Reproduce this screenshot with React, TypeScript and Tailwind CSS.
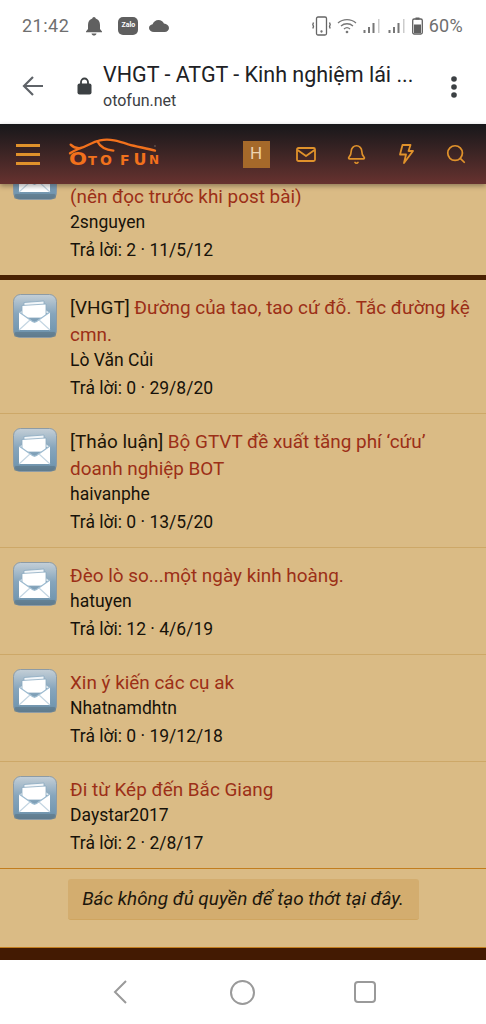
import { Bell, Search } from "lucide-react";

const threads = [
  { prefix: "[VHGT] ", title: "Đường của tao, tao cứ đỗ. Tắc đường kệ cmn.", author: "Lò Văn Củi", meta: "Trả lời: 0 · 29/8/20" },
  { prefix: "[Thảo luận] ", title: "Bộ GTVT đề xuất tăng phí ‘cứu’ doanh nghiệp BOT", author: "haivanphe", meta: "Trả lời: 0 · 13/5/20" },
  { prefix: "", title: "Đèo lò so...một ngày kinh hoàng.", author: "hatuyen", meta: "Trả lời: 12 · 4/6/19" },
  { prefix: "", title: "Xin ý kiến các cụ ak", author: "Nhatnamdhtn", meta: "Trả lời: 0 · 19/12/18" },
  { prefix: "", title: "Đi từ Kép đến Bắc Giang", author: "Daystar2017", meta: "Trả lời: 2 · 2/8/17" },
];

function EnvelopeIcon() {
  return (
    <svg width="44" height="44" viewBox="0 0 44 44" className="shrink-0">
      <defs>
        <linearGradient id="tile" x1="0" y1="0" x2="0" y2="1">
          <stop offset="0" stopColor="#c4cfd7" />
          <stop offset="0.45" stopColor="#86a5bc" />
          <stop offset="0.85" stopColor="#7397b0" />
          <stop offset="1" stopColor="#5d7a8e" />
        </linearGradient>
      </defs>
      <rect x="0.500" y="0.500" width="43" height="43" rx="7" fill="url(#tile)" stroke="#8d9ba5" />
      <rect x="1" y="38" width="42" height="5" rx="2.500" fill="#5f7a8c" opacity="0.700" />
      <path d="M6 19 21 8l16 11z" fill="#e6eef3" />
      <path d="M11 22V8.500L31 7v15z" fill="#f2f6f9" stroke="#8aa9c0" strokeWidth="0.800" />
      <path d="M9 24V11.500l24-1.500v14z" fill="#fff" stroke="#8aa9c0" strokeWidth="0.800" />
      <path d="M6 18 21.500 28.500 37 18v18H6z" fill="#fff" />
      <path d="M6 18 19.500 27.500c1.300.9 2.700.9 4 0L37 18" fill="none" stroke="#9dbbd0" strokeWidth="1.200" />
      <path d="M6 36 17 26M37 36 26 26" fill="none" stroke="#c3d5e2" strokeWidth="1.100" />
    </svg>
  );
}

function Signal() {
  return (
    <svg width="17" height="16" viewBox="0 0 17 16">
      <rect x="0.500" y="12" width="2" height="3" fill="#777" />
      <rect x="5" y="9" width="2" height="6" fill="#777" />
      <rect x="9.500" y="5" width="2" height="10" fill="#777" />
      <rect x="15" y="1" width="1.500" height="14" fill="#ccc" />
    </svg>
  );
}

function StatusBar() {
  return (
    <div className="flex h-[46px] items-center bg-white pl-[22px] pr-[23px] pt-[5px] text-[#6f6f6f]">
      <span className="text-[18px] tracking-[0.5px]">21:42</span>
      <svg width="18" height="20" viewBox="0 0 18 20" className="ml-[16px]" fill="#606060">
        <path d="M9 1c1 0 1.600.8 1.700 1.600C13.500 3.400 15 5.800 15 9v4l2 2.500v.8H1v-.8L3 13V9c0-3.200 1.500-5.600 4.300-6.400C7.400 1.800 8 1 9 1z" />
        <path d="M6.500 17.500h5C11.200 18.900 10.200 19.500 9 19.500s-2.200-.6-2.500-2z" />
      </svg>
      <div className="ml-[15px] flex h-[18px] w-[20px] items-center justify-center rounded-[5px] bg-[#5f5f5f] text-[7px] font-bold leading-none text-white">
        Zalo
      </div>
      <svg width="20" height="12" viewBox="0 0 20 12" className="ml-[11px]" fill="#606060">
        <path d="M5 12C2 12 0 10.300 0 8c0-2.100 1.600-3.600 3.600-3.800C4.500 1.800 6.700 0 9.500 0c2.500 0 4.500 1.300 5.400 3.500C17.700 3.800 20 5.500 20 8c0 2.300-1.800 4-4.300 4z" />
      </svg>
      <div className="ml-auto flex items-center">
        <svg width="19" height="20" viewBox="0 0 19 20" fill="none" stroke="#666" strokeWidth="1.300">
          <rect x="4.500" y="1" width="10" height="18" rx="1.500" />
          <path d="M1.500 6.500.8 8.500l.7 2-.7 2M17.500 6.500l.7 2-.7 2 .7 2" />
          <circle cx="9.500" cy="15.500" r="0.500" />
        </svg>
        <svg width="20" height="16" viewBox="0 0 20 16" fill="none" stroke="#777" strokeWidth="1.300" className="ml-[6px]">
          <path d="M1 5c5-4.500 13-4.500 18 0M4 8c3.300-3 8.700-3 12 0M7 11c1.700-1.500 4.300-1.500 6 0" />
          <circle cx="10" cy="14" r="0.700" fill="#777" />
        </svg>
        <div className="ml-[6px]">
          <Signal />
        </div>
        <div className="ml-[8px]">
          <Signal />
        </div>
        <svg width="11" height="18" viewBox="0 0 11 18" className="ml-[7px]">
          <rect x="0.700" y="2" width="9.600" height="15" rx="1.500" fill="none" stroke="#606060" strokeWidth="1.300" />
          <rect x="3.500" y="0.500" width="4" height="2" fill="#606060" />
          <rect x="2" y="7.500" width="7" height="8.500" fill="#606060" />
        </svg>
        <span className="ml-[6px] text-[18px] tracking-[0.3px]">60%</span>
      </div>
    </div>
  );
}

function BrowserBar() {
  return (
    <div className="flex h-[78px] items-center bg-white">
      <svg width="22" height="22" viewBox="0 0 22 22" fill="none" stroke="#5f6368" strokeWidth="2.200" className="ml-[22px] mt-[2px]">
        <path d="M21 11H2M11 2l-9 9 9 9" />
      </svg>
      <svg width="15" height="18" viewBox="0 0 15 18" className="ml-[33px] mt-[2px] shrink-0">
        <path d="M4 8V5a3.500 3.500 0 0 1 7 0v3" fill="none" stroke="#3c4043" strokeWidth="1.800" />
        <rect x="0.500" y="6.500" width="14" height="11" rx="2" fill="#3c4043" />
      </svg>
      <div className="ml-[11px] min-w-0 flex-1 pt-[4px]">
        <div className="whitespace-nowrap text-[21.500px] leading-[28px] text-[#202124]">VHGT - ATGT - Kinh nghiệm lái ...</div>
        <div className="text-[16px] leading-[24px] text-[#3c4043]">otofun.net</div>
      </div>
      <svg width="8" height="24" viewBox="0 0 8 24" fill="#3c4043" className="mr-[28px] mt-[3px]">
        <circle cx="4" cy="4" r="2.800" />
        <circle cx="4" cy="12" r="2.800" />
        <circle cx="4" cy="20" r="2.800" />
      </svg>
    </div>
  );
}

function Logo() {
  return (
    <div className="relative mb-[3px] ml-[20px] h-[45px] w-[110px] font-['DejaVu_Sans',sans-serif] font-bold leading-none text-[#f2711c]">
      <svg width="110" height="45" viewBox="0 0 330 135" className="absolute left-0 top-0" fill="none" stroke="#f2711c" strokeWidth="7" strokeLinecap="round">
        <path d="M32 44C40 52 50 56 62 54 80 50 95 36 120 31 150 25 175 33 205 43 230 50 260 55 285 62" />
        <path d="M30 70C42 62 52 58 62 54" />
        <path d="M112 34C120 50 135 60 160 62" />
        <circle cx="285" cy="48" r="2" fill="#8a7a70" stroke="none" />
      </svg>
      <span className="absolute left-[10px] top-[21px] w-[16px] scale-x-125 text-center text-[17px]">O</span>
      <span className="absolute left-[28px] top-[24px] w-[9px] text-center text-[13px]">T</span>
      <span className="absolute left-[40px] top-[23px] w-[12px] text-center text-[14px]">O</span>
      <span className="absolute left-[60px] top-[23px] w-[8px] text-center text-[14px]">F</span>
      <span className="absolute left-[73px] top-[22px] w-[14px] text-center text-[16px]">U</span>
      <span className="absolute left-[89px] top-[24px] w-[10px] text-center text-[12px]">N</span>
    </div>
  );
}

function Header() {
  return (
    <header className="relative z-10 flex h-[60px] shrink-0 items-center bg-gradient-to-b from-[#17171a] to-[#67322f] shadow-[0_2px_5px_rgba(0,0,0,0.35)]">
      <div className="ml-[16px] flex w-[24px] flex-col gap-[6px]">
        <span className="h-[3px] bg-[#e0922b]" />
        <span className="h-[3px] bg-[#e0922b]" />
        <span className="h-[3px] bg-[#e0922b]" />
      </div>
      <Logo />
      <div className="ml-auto mr-[5px] flex items-center text-[#e0922b]">
        <div className="flex w-[50px] justify-center">
          <div className="flex h-[27px] w-[27px] items-center justify-center bg-[#a5692a] text-[17px] text-[#eed5b0]">H</div>
        </div>
        <div className="flex w-[50px] justify-center">
          <svg width="20" height="15" viewBox="0 0 20 15" fill="none" stroke="currentColor" strokeWidth="1.800" strokeLinejoin="round">
            <rect x="1" y="1" width="18" height="13" rx="1.500" />
            <path d="M1.500 3 10 9l8.500-6" />
          </svg>
        </div>
        <div className="flex w-[50px] justify-center">
          <Bell className="h-[21px] w-[21px]" strokeWidth={1.900} />
        </div>
        <div className="flex w-[50px] justify-center">
          <svg width="15" height="20" viewBox="0 0 15 20" fill="none" stroke="currentColor" strokeWidth="1.800" strokeLinejoin="round">
            <path d="M3.500 1h8L9.500 7H14L5 19l2-8.500H1z" />
          </svg>
        </div>
        <div className="flex w-[50px] justify-center">
          <Search className="h-[22px] w-[22px]" strokeWidth={1.900} />
        </div>
      </div>
    </header>
  );
}

function Row({ prefix, title, author, meta }: { prefix: string; title: React.ReactNode; author: string; meta: string }) {
  return (
    <div className="flex gap-[13px] pb-[12px] pl-[13px] pr-[6px] pt-[13px]">
      <div className="pt-[1px]">
        <EnvelopeIcon />
      </div>
      <div className="min-w-0 flex-1 pt-[0.500px]">
        <div className="text-[18.900px] leading-[27px] text-[#9c2f17]">
          {prefix && <span className="text-[#1c1408]">{prefix}</span>}
          {title}
        </div>
        <div className="text-[17.500px] leading-[25px] text-[#16120a]">{author}</div>
        <div className="mt-[2.500px] text-[17.500px] leading-[26px] text-[#16120a]">{meta}</div>
      </div>
    </div>
  );
}

export default function App() {
  return (
    <div className="flex h-[1024px] w-[486px] flex-col overflow-hidden bg-white font-['Roboto',sans-serif]">
      <StatusBar />
      <BrowserBar />
      <Header />
      <main className="min-h-0 flex-1 overflow-hidden bg-[#dabb85]">
        {/* first thread is scrolled under the header */}
        <div className="-mt-[42px] border-b-[5px] border-[#4a2203]">
          <Row prefix="" title={<>&nbsp;<br />(nên đọc trước khi post bài)</>} author="2snguyen" meta="Trả lời: 2 · 11/5/12" />
        </div>
        {threads.map((t, i) => (
          <div key={t.author} className={i === threads.length - 1 ? "border-b border-[#c27d1e]" : "border-b border-[#cda868]"}>
            <Row {...t} />
          </div>
        ))}
        <div className="flex justify-center pt-[10px]">
          <div className="flex h-[41px] w-[351px] items-center justify-center rounded-[3px] border-b border-[#cfa560] bg-[#d3ad6f] text-[18.900px] italic text-[#1c160c]">
            Bác không đủ quyền để tạo thớt tại đây.
          </div>
        </div>
        <div className="mt-[27px] h-[1px] bg-[#c27d1e]" />
        <div className="h-[12px] bg-[#431a02]" />
      </main>
      <nav className="flex h-[64px] shrink-0 items-center bg-white pl-[113px]">
        <svg width="16" height="24" viewBox="0 0 16 24" fill="none" stroke="#9a9a9a" strokeWidth="2">
          <path d="M13 1 2 12l11 11" />
        </svg>
        <div className="ml-[101px] h-[25px] w-[25px] rounded-full border-2 border-[#9a9a9a]" />
        <div className="ml-[99px] h-[22px] w-[22px] rounded-[4px] border-2 border-[#9a9a9a]" />
      </nav>
    </div>
  );
}
